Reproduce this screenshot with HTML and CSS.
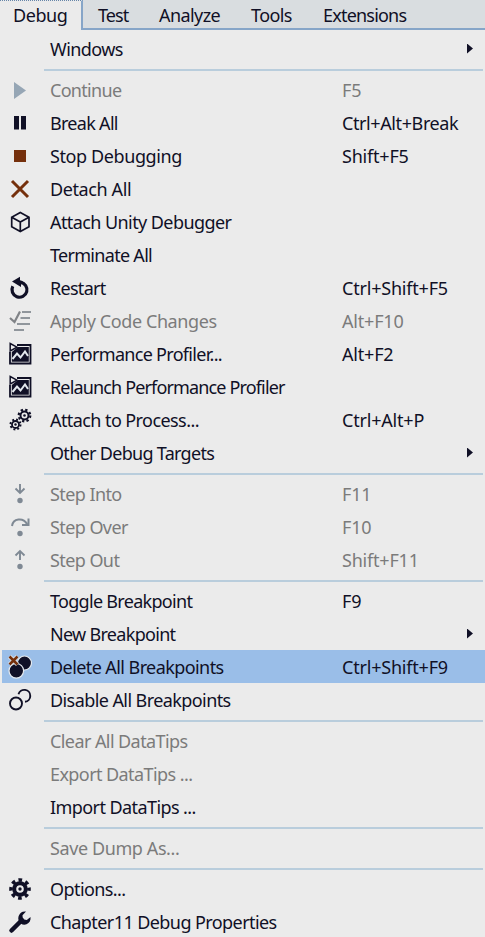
FILE: index.html
```html
<!DOCTYPE html>
<html lang="en">
<head>
<meta charset="utf-8">
<title>Debug menu</title>
<link rel="stylesheet" href="styles.css">
</head>
<body>
<nav class="menubar">
  <span class="tab open">Debug</span>
  <span class="tab test">Test</span>
  <span class="tab analyze">Analyze</span>
  <span class="tab tools">Tools</span>
  <span class="tab extensions">Extensions</span>
</nav>
<main class="menu">
  <div class="row"><i></i><span>Windows</span><b class="arrow"></b></div>
  <hr>
  <div class="row off"><svg viewBox="0 0 24 24"><path d="M6 4l12 8.500-12 8.500z" fill="#96a6b5"/></svg><span class="tight">Continue</span><kbd>F5</kbd></div>
  <div class="row"><svg viewBox="0 0 24 24"><path d="M6 5h5v13.500H6zM13 5h5v13.500h-5z" fill="#101026"/></svg><span class="tight">Break All</span><kbd class="narrow">Ctrl+Alt+Break</kbd></div>
  <div class="row"><svg viewBox="0 0 24 24"><path d="M6 6h12v12H6z" fill="#75300c"/></svg><span class="loose">Stop Debugging</span><kbd>Shift+F5</kbd></div>
  <div class="row"><svg viewBox="0 0 24 24"><path d="M4 4l16 16M20 4L4 20" stroke="#75300c" stroke-width="3"/></svg><span class="loose">Detach All</span></div>
  <div class="row"><svg viewBox="0 0 24 24"><path d="M12.300 2.500L21 7.200v9.600l-8.700 4.700-8.600-4.700V7.200zM3.700 7.200l8.600 4.900L21 7.200M12.300 12.100v9.400" fill="none" stroke="#101026" stroke-width="1.700"/></svg><span>Attach Unity Debugger</span></div>
  <div class="row"><i></i><span class="tight">Terminate All</span></div>
  <div class="row"><svg viewBox="0 0 24 24"><path d="M4.800 10.300A7.500 7.500 0 1 0 12.500 6.300" fill="none" stroke="#101026" stroke-width="3.200"/><path d="M4 5.500L12 .8v3.500l3 1-2 3V11z" fill="#101026"/></svg><span class="tight">Restart</span><kbd>Ctrl+Shift+F5</kbd></div>
  <div class="row off"><svg viewBox="0 0 24 24"><path d="M2 9l4.500 4L12 2.500" fill="none" stroke="#808387" stroke-width="2.200"/><path d="M14 3h9M12.500 9H22M9 15h13M6 21h10" stroke="#90969c" stroke-width="2.200"/></svg><span class="loose">Apply Code Changes</span><kbd>Alt+F10</kbd></div>
  <div class="row"><svg viewBox="0 0 24 24"><use href="#profiler"/></svg><span class="tight">Performance Profiler...</span><kbd>Alt+F2</kbd></div>
  <div class="row"><svg viewBox="0 0 24 24"><use href="#profiler"/></svg><span class="tighter">Relaunch Performance Profiler</span></div>
  <div class="row"><svg viewBox="0 0 24 24"><g fill="none" stroke="#101026"><circle cx="16.500" cy="7.500" r="4" stroke-width="2"/><circle cx="16.500" cy="7.500" r="5.800" stroke-width="2.200" stroke-dasharray="2.300 2.255"/><circle cx="7.500" cy="16.500" r="3.500" stroke-width="1.800"/><circle cx="7.500" cy="16.500" r="5" stroke-width="2" stroke-dasharray="1.900 2.027"/></g><circle cx="16.500" cy="7.500" r="1.300" fill="#101026"/><circle cx="7.500" cy="16.500" r="1.200" fill="#101026"/></svg><span>Attach to Process...</span><kbd>Ctrl+Alt+P</kbd></div>
  <div class="row"><i></i><span class="tight">Other Debug Targets</span><b class="arrow"></b></div>
  <hr>
  <div class="row off"><svg viewBox="0 0 24 24"><path d="M12 2v9M7.500 6.500L12 11l4.500-4.500" fill="none" stroke="#7f8994" stroke-width="1.900"/><circle cx="12" cy="18.500" r="2.700" fill="#7f8994"/></svg><span>Step Into</span><kbd>F11</kbd></div>
  <div class="row off"><svg viewBox="0 0 24 24"><path d="M4 11C5 3.500 15 2 19 9M20.500 3.500V10H14" fill="none" stroke="#7f8994" stroke-width="2"/><circle cx="12" cy="18.500" r="2.700" fill="#7f8994"/></svg><span>Step Over</span><kbd>F10</kbd></div>
  <div class="row off"><svg viewBox="0 0 24 24"><path d="M12 12V3M7.500 7.500L12 3l4.500 4.500" fill="none" stroke="#7f8994" stroke-width="1.900"/><circle cx="12" cy="18.500" r="2.700" fill="#7f8994"/></svg><span>Step Out</span><kbd>Shift+F11</kbd></div>
  <hr>
  <div class="row"><i></i><span class="tight">Toggle Breakpoint</span><kbd>F9</kbd></div>
  <div class="row"><i></i><span class="tight">New Breakpoint</span><b class="arrow"></b></div>
  <div class="row selected"><svg viewBox="0 0 24 24"><g stroke="#e4e9ee" stroke-width="1.200"><circle cx="16.500" cy="8" r="7" fill="#101026"/><circle cx="8.300" cy="15.800" r="7.300" fill="#101026"/></g><path d="M1.500 1.500l8 8M9.500 1.500l-8 8" stroke="#e4e9ee" stroke-width="4.200"/><path d="M1.500 1.500l8 8M9.500 1.500l-8 8" stroke="#75300c" stroke-width="2.600"/></svg><span>Delete All Breakpoints</span><kbd>Ctrl+Shift+F9</kbd></div>
  <div class="row"><svg viewBox="0 0 24 24"><g fill="none" stroke="#101026" stroke-width="1.900"><circle cx="8" cy="15.500" r="6"/><path d="M10.500 6.200a6 6 0 1 1 6.500 7.600"/></g></svg><span>Disable All Breakpoints</span></div>
  <hr>
  <div class="row off"><i></i><span>Clear All DataTips</span></div>
  <div class="row off"><i></i><span>Export DataTips ...</span></div>
  <div class="row"><i></i><span>Import DataTips ...</span></div>
  <hr>
  <div class="row off"><i></i><span class="loose">Save Dump As...</span></div>
  <hr>
  <div class="row"><svg viewBox="0 0 24 24"><g fill="none" stroke="#101026"><circle cx="12" cy="12" r="5.800" stroke-width="4"/><circle cx="12" cy="12" r="9" stroke-width="3.600" stroke-dasharray="3.600 3.469" stroke-dashoffset="1.800"/></g><circle cx="12" cy="12" r="1.700" fill="#101026"/></svg><span>Options...</span></div>
  <div class="row"><svg viewBox="0 0 24 24"><path d="M3.500 20.500L14 10" stroke="#101026" stroke-width="4.500" stroke-linecap="round"/><path d="M18 1.500a6.800 6.800 0 0 0-7.500 8.500c1 4 5 5.500 8 4.300 3-1.200 4.500-4 4-7.300L18.800 10l-4-.8-.3-4z" fill="#101026"/></svg><span>Chapter11 Debug Properties</span></div>
</main>
<svg class="defs">
  <symbol id="profiler" viewBox="0 0 24 24">
    <path d="M9 3h13.500v18.500H2V10" fill="none" stroke="#101026" stroke-width="1.800"/>
    <path d="M10 5H20.800V19.800H3.800V10z" fill="#101026"/>
    <path d="M4.500 17l4.500-5.500 3.500 4L17 9.500l3 4.500" fill="none" stroke="#e4e9ee" stroke-width="2"/>
    <path d="M2.200 1.500L9 5.200 2.200 9z" fill="#ebebeb" stroke="#101026" stroke-width="1.500"/>
  </symbol>
</svg>
</body>
</html>
```
FILE: styles.css
```css
* { box-sizing: border-box; }
body {
  margin: 0;
  width: 485px;
  height: 937px;
  overflow: hidden;
  background: #ebebeb;
  color: #101026;
  font-family: "Noto Sans", "Open Sans", sans-serif;
  font-size: 18px;
  letter-spacing: -0.58px;
  white-space: nowrap;
}
.menubar {
  display: flex;
  height: 30px;
  line-height: 30px;
  background: #d9dde0;
  border-bottom: 2px solid #86a5c8;
}
.tab.open {
  width: 83px;
  height: 30px;
  padding-left: 13px;
  line-height: 28px;
  letter-spacing: -0.45px;
  background: #ebebeb;
  border-top: 1px dotted #6685a8;
  border-right: 2px solid #86a5c8;
}
.tab { flex: none; }
.test { width: 76px; padding-left: 15px; letter-spacing: -0.9px; }
.analyze { width: 92px; }
.tools { width: 72px; }
.extensions { letter-spacing: -0.8px; }
.menu { padding-top: 2px; }
.row {
  display: grid;
  grid-template-columns: 42px 292px 1fr;
  align-items: center;
  height: 33px;
  margin-left: 2px;
  padding-left: 6px;
  line-height: 32px;
}
.row svg { width: 24px; height: 24px; }
.row kbd { font: inherit; letter-spacing: -0.2px; }
.row .narrow { letter-spacing: -0.4px; }
.loose { letter-spacing: -0.4px; }
.tight { letter-spacing: -0.7px; }
.tighter { letter-spacing: -0.85px; }
.off { color: #7b7b7b; }
.selected { background: #9abee8; }
hr {
  height: 2px;
  margin: 4px 2px 2px 44px;
  border: 0;
  background: #b9cddc;
}
.arrow {
  justify-self: end;
  width: 6px;
  height: 10px;
  margin-right: 12px;
  background: #101026;
  clip-path: polygon(0 0, 100% 50%, 0 100%);
}
.defs { display: none; }
```
